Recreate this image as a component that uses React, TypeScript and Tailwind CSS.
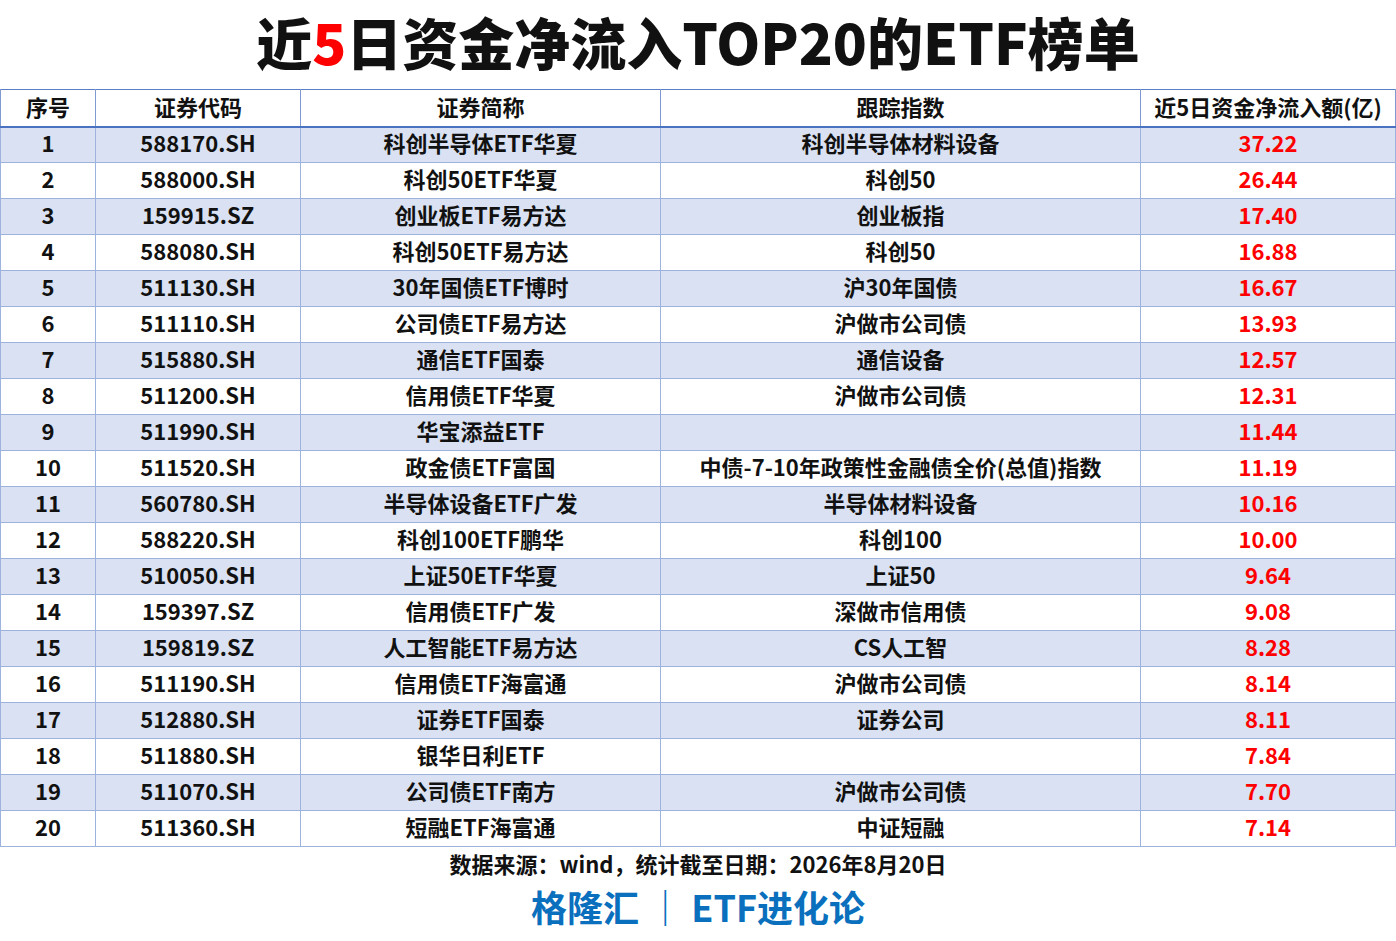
const rows: [string, string, string, string][] = [
  ["588170.SH", "科创半导体ETF华夏", "科创半导体材料设备", "37.22"],
  ["588000.SH", "科创50ETF华夏", "科创50", "26.44"],
  ["159915.SZ", "创业板ETF易方达", "创业板指", "17.40"],
  ["588080.SH", "科创50ETF易方达", "科创50", "16.88"],
  ["511130.SH", "30年国债ETF博时", "沪30年国债", "16.67"],
  ["511110.SH", "公司债ETF易方达", "沪做市公司债", "13.93"],
  ["515880.SH", "通信ETF国泰", "通信设备", "12.57"],
  ["511200.SH", "信用债ETF华夏", "沪做市公司债", "12.31"],
  ["511990.SH", "华宝添益ETF", "", "11.44"],
  ["511520.SH", "政金债ETF富国", "中债-7-10年政策性金融债全价(总值)指数", "11.19"],
  ["560780.SH", "半导体设备ETF广发", "半导体材料设备", "10.16"],
  ["588220.SH", "科创100ETF鹏华", "科创100", "10.00"],
  ["510050.SH", "上证50ETF华夏", "上证50", "9.64"],
  ["159397.SZ", "信用债ETF广发", "深做市信用债", "9.08"],
  ["159819.SZ", "人工智能ETF易方达", "CS人工智", "8.28"],
  ["511190.SH", "信用债ETF海富通", "沪做市公司债", "8.14"],
  ["512880.SH", "证券ETF国泰", "证券公司", "8.11"],
  ["511880.SH", "银华日利ETF", "", "7.84"],
  ["511070.SH", "公司债ETF南方", "沪做市公司债", "7.70"],
  ["511360.SH", "短融ETF海富通", "中证短融", "7.14"],
];

const font = { fontFamily: '"Noto Sans CJK SC", "Noto Sans", sans-serif' };

export default function App() {
  return (
    <div className="w-[1396px] h-[941px] bg-white text-[#111]" style={font}>
      <h1 className="h-[89px] flex items-center justify-center text-[56px] font-black leading-none pb-2">
        近<span className="text-[#ff0000]">5</span>日资金净流入TOP20的ETF榜单
      </h1>

      <table className="w-full border-collapse table-fixed text-[22px] font-bold leading-none">
        <colgroup>
          <col className="w-[95px]" />
          <col className="w-[205px]" />
          <col className="w-[360px]" />
          <col className="w-[480px]" />
          <col />
        </colgroup>
        <thead>
          <tr className="h-[37px] border-t border-t-[#5b7fc7] border-b-2 border-b-[#4a72c0]">
            <th className="border-x border-[#7f9ad0] font-semibold pb-1">序号</th>
            <th className="border-x border-[#7f9ad0] font-semibold pb-1">证券代码</th>
            <th className="border-x border-[#7f9ad0] font-semibold pb-1">证券简称</th>
            <th className="border-x border-[#7f9ad0] font-semibold pb-1">跟踪指数</th>
            <th className="border-x border-[#7f9ad0] font-semibold pb-1">近5日资金净流入额(亿)</th>
          </tr>
        </thead>
        <tbody>
          {rows.map((r, i) => (
            <tr key={r[0]} className={i % 2 === 0 ? "h-9 bg-[#d9e1f2]" : "h-9 bg-white"}>
              <td className="border border-[#9db2dc] text-center pb-[6px]">{i + 1}</td>
              <td className="border border-[#9db2dc] text-center pb-[6px]">{r[0]}</td>
              <td className="border border-[#9db2dc] text-center pb-[6px]">{r[1]}</td>
              <td className="border border-[#9db2dc] text-center pb-[6px]">{r[2]}</td>
              <td className="border border-[#9db2dc] text-center pb-[6px] text-[#ff0000]">{r[3]}</td>
            </tr>
          ))}
        </tbody>
      </table>

      <p className="text-center text-[22px] font-bold leading-[32px]">
        数据来源：wind，统计截至日期：2026年8月20日
      </p>
      <p className="text-center text-[36px] font-bold text-[#0a6fbd] leading-[50px] mt-[2px]">
        格隆汇 ｜ ETF进化论
      </p>
    </div>
  );
}
